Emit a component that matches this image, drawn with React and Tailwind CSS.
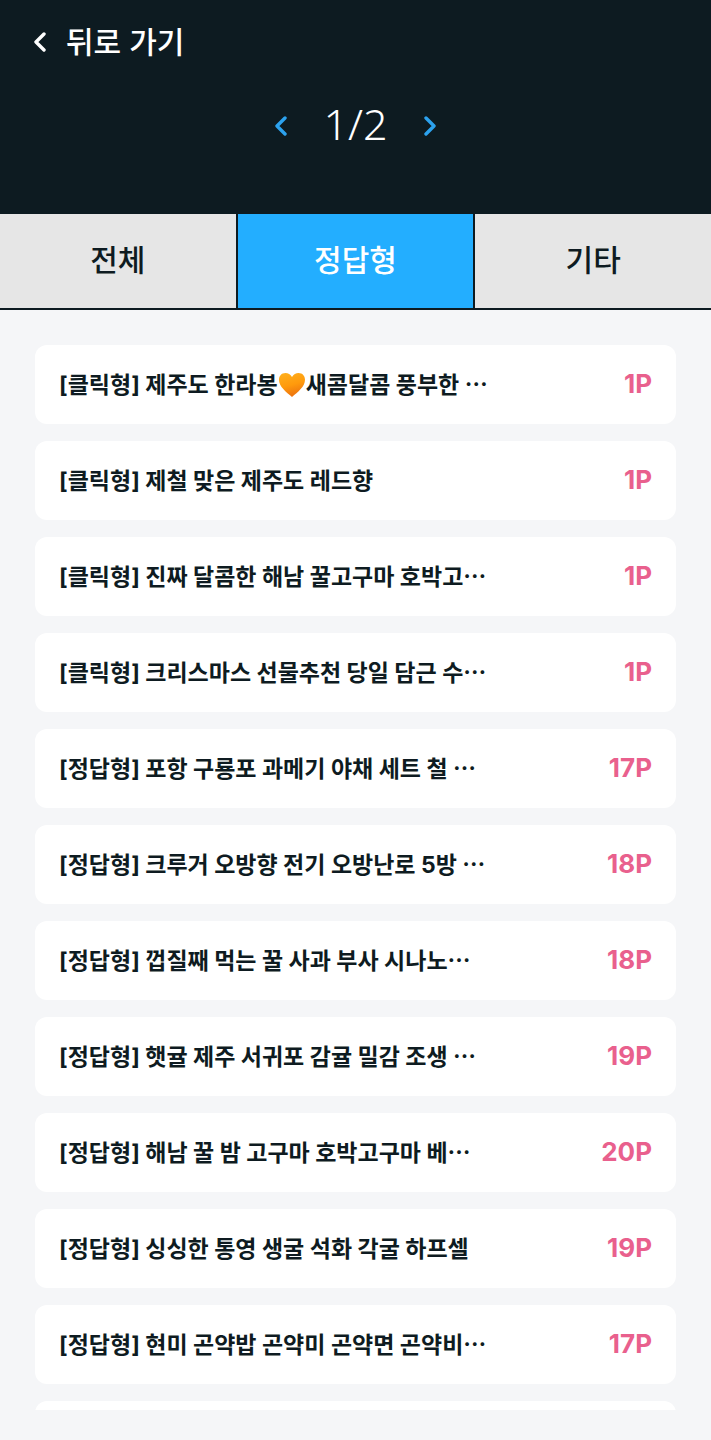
import React, { useState } from 'react';

const tabs = ['전체', '정답형', '기타'];

const missions = [
  { title: '[클릭형] 제주도 한라봉🧡새콤달콤 풍부한 ⋯', point: 1 },
  { title: '[클릭형] 제철 맞은 제주도 레드향', point: 1 },
  { title: '[클릭형] 진짜 달콤한 해남 꿀고구마 호박고⋯', point: 1 },
  { title: '[클릭형] 크리스마스 선물추천 당일 담근 수⋯', point: 1 },
  { title: '[정답형] 포항 구룡포 과메기 야채 세트 철 ⋯', point: 17 },
  { title: '[정답형] 크루거 오방향 전기 오방난로 5방 ⋯', point: 18 },
  { title: '[정답형] 껍질째 먹는 꿀 사과 부사 시나노⋯', point: 18 },
  { title: '[정답형] 햇귤 제주 서귀포 감귤 밀감 조생 ⋯', point: 19 },
  { title: '[정답형] 해남 꿀 밤 고구마 호박고구마 베⋯', point: 20 },
  { title: '[정답형] 싱싱한 통영 생굴 석화 각굴 하프셀', point: 19 },
  { title: '[정답형] 현미 곤약밥 곤약미 곤약면 곤약비⋯', point: 17 },
];

function Chevron({ className, right }) {
  return (
    <svg viewBox="0 0 12 20" className={className} fill="none" stroke="currentColor" strokeWidth="3.4" strokeLinecap="round" strokeLinejoin="round">
      <path d={right ? 'M2 2l8 8-8 8' : 'M10 2l-8 8 8 8'} />
    </svg>
  );
}

function OrangeHeart() {
  return (
    <svg viewBox="0 0 28 26" role="img" aria-label="🧡" className="inline-block h-[26px] w-[28px] align-[-5px]">
      <defs>
        <linearGradient id="heart" x1="0.3" y1="0" x2="0.6" y2="1">
          <stop offset="0" stopColor="#ffae1c" />
          <stop offset="0.5" stopColor="#ff9a0c" />
          <stop offset="1" stopColor="#ea6f10" />
        </linearGradient>
      </defs>
      <path
        d="M14 5C12.400 2.400 10.200 1 7.400 1C3.600 1 1 3.900 1 7.800C1 14.600 8.200 20.200 14 25C19.800 20.200 27 14.600 27 7.800C27 3.900 24.400 1 20.600 1C17.800 1 15.600 2.400 14 5Z"
        fill="url(#heart)"
      />
    </svg>
  );
}

function Title({ text }) {
  const [before, after] = text.split('🧡');
  return (
    <span className="whitespace-nowrap text-[23px] leading-8 font-bold text-[#0e1b21]">
      {before}
      {after && <OrangeHeart />}
      {after}
    </span>
  );
}

function App() {
  const [active, setActive] = useState('정답형');

  return (
    <div className="flex h-screen flex-col bg-[#f5f6f8] font-['Inter','Noto_Sans_CJK_KR',sans-serif]">
      <header className="flex flex-col bg-[#0d1b21] pt-5 pb-14">
        <button type="button" className="flex items-center gap-5 self-start pl-[34px] text-[30px] leading-11 font-medium text-white">
          <Chevron className="h-5 w-3" />
          뒤로 가기
        </button>
        <nav className="mt-8 flex items-center justify-center gap-9">
          <button type="button" aria-label="이전" className="text-[#2ca2ee]">
            <Chevron className="h-5 w-3" />
          </button>
          <span className="pb-1 font-['Noto_Sans',sans-serif] text-[43px] leading-14 font-light text-white">1/2</span>
          <button type="button" aria-label="다음" className="text-[#2ca2ee]">
            <Chevron className="h-5 w-3" right />
          </button>
        </nav>
      </header>

      <div className="grid grid-cols-3 gap-0.5 border-y-2 border-[#0d1b21] bg-[#0d1b21]">
        {tabs.map((tab) => (
          <button
            key={tab}
            type="button"
            onClick={() => setActive(tab)}
            className={`h-[94px] pb-0.5 text-[30px] font-medium ${
              active === tab ? 'bg-[#23aeff] text-white' : 'bg-[#e6e6e6] text-[#0e1b21]'
            }`}
          >
            {tab}
          </button>
        ))}
      </div>

      <main className="mt-[35px] mb-[30px] min-h-0 flex-1 overflow-hidden px-[35px]">
        <ul className="flex flex-col gap-[17px]">
          {missions.map((item) => (
            <li key={item.title}>
              <a href="#" className="flex h-[79px] items-center justify-between rounded-xl bg-white px-6">
                <Title text={item.title} />
                <span className="pb-0.5 text-[26px] leading-8 font-bold text-[#e9608d]">{item.point}P</span>
              </a>
            </li>
          ))}
          <li className="h-[79px] rounded-xl bg-white" />
        </ul>
      </main>
    </div>
  );
}

export default App;
